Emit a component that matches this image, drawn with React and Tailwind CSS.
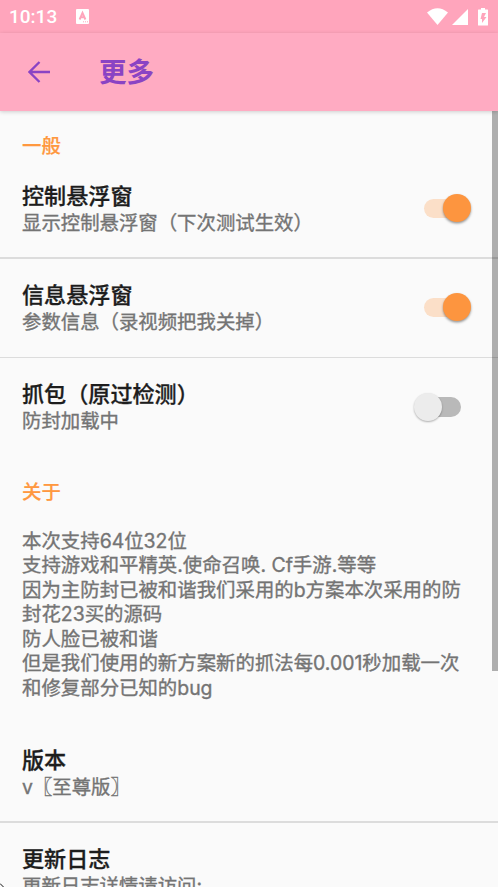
import React from 'react'

// Preferencias de la sección general
const generales = [
  { id: 1, titulo: '控制悬浮窗', resumen: '显示控制悬浮窗（下次测试生效）', activo: true },
  { id: 2, titulo: '信息悬浮窗', resumen: '参数信息（录视频把我关掉）', activo: true },
  { id: 3, titulo: '抓包（原过检测）', resumen: '防封加载中', activo: false }
]

const bordes = ['border-b-2', 'border-b', 'border-b-0']

const lineas = [
  '本次支持64位32位',
  '支持游戏和平精英.使命召唤. Cf手游.等等',
  '因为主防封已被和谐我们采用的b方案本次采用的防',
  '封花23买的源码',
  '防人脸已被和谐',
  '但是我们使用的新方案新的抓法每0.001秒加载一次',
  '和修复部分已知的bug'
]

const Interruptor = ({ activo }) => (
  <div className={activo ? 'relative w-[47px] h-7' : 'relative w-[47px] h-7 mr-[10px]'}>
    <div className={activo
      ? 'absolute left-0 top-[4.5px] w-[37px] h-[19px] rounded-full bg-[#fbdfc8]'
      : 'absolute right-0 top-[4.5px] w-[37px] h-[19.5px] rounded-full bg-[#b9b9b9]'} />
    <div className={activo
      ? 'absolute right-0 top-0 size-7 rounded-full bg-[#fd953f] shadow-[0_1.5px_2.5px_rgba(0,0,0,0.4)]'
      : 'absolute left-0 top-0 size-7 rounded-full bg-[#ececec] shadow-[0_1px_2px_rgba(0,0,0,0.3)]'} />
  </div>
)

const Preferencia = ({ titulo, resumen, children }) => (
  <div className="flex justify-between h-[99px] pl-[22px] pr-[27px] pt-[22.4px]">
    <div>
      <div className="text-[22.1px] leading-[28px] font-medium text-[#1d1d1d] whitespace-nowrap [-webkit-text-stroke:0.3px_#1d1d1d]">{titulo}</div>
      <div className="text-[19.4px] leading-[26px] text-[#747474] whitespace-nowrap [-webkit-text-stroke:0.35px_#747474]">{resumen}</div>
    </div>
    <div className="pt-[12.2px]">{children}</div>
  </div>
)

const App = () => {
  return (
    <div className="relative w-full h-[887px] overflow-hidden bg-[#fafafa] font-['Inter','Noto_Sans_CJK_SC',sans-serif]">
      {/* Barra de estado */}
      <div className="flex items-center justify-between h-[33px] pl-[9px] pr-[8px] bg-[#ffa5bc]">
        <div className="flex items-center">
          <span className="font-[Roboto,sans-serif] text-[19px] leading-[35px] font-medium text-white">10:13</span>
          <svg className="ml-[19px]" width="13" height="15" viewBox="0 0 13 15">
            <rect width="13" height="15" rx="1" fill="#fff" />
            <path d="M3.6 10.5 6.5 3.8l2.900 6.700M4.700 8.300h3.600" fill="none" stroke="#ffa5bc" strokeWidth="1.9" />
            <path d="M7 12.800h1M9 12.800h1M11 12.800h1" stroke="#ffa5bc" />
          </svg>
        </div>
        <svg width="63" height="18" viewBox="0 0 63 18">
          <path d="M0 4.500Q10.500-4 21 4.500L10.500 17Z" fill="#fff" />
          <path d="M25 17 41 1v16Z" fill="#fff" />
          <path d="M54 1.500V0h4v1.500h2.500q.5 0 .5.500v15q0 .5-.5.500h-9q-.5 0-.5-.5V2q0-.5.500-.5Z" fill="#fff" />
          <path d="M55 5H59L57 9H59.500L55 15V11H53.500Z" fill="#ffa5bc" />
        </svg>
      </div>

      {/* Barra superior */}
      <header className="relative flex items-center h-[78px] pl-[28px] bg-[#ffabc2] shadow-[0_1px_4px_rgba(0,0,0,0.18)]">
        <svg width="22" height="22" viewBox="0 0 22 22" fill="none" stroke="#8a43c4" strokeWidth="2.3">
          <path d="M22 11H1.500M11.500 1 1.500 11l10 10" />
        </svg>
        <h1 className="ml-[49px] text-[27.5px] leading-[40px] font-bold text-[#8a43c4]">更多</h1>
      </header>

      <main>
        <h2 className="pl-[22px] pt-[22px] h-[48.6px] text-[19.4px] leading-[26px] font-medium text-[#ff983f] [-webkit-text-stroke:0.2px_#ff983f]">一般</h2>
        {generales.map((item, i) => (
          <div key={item.id} className={`${bordes[i]} border-[#dcdcdc] h-[99.2px]`}>
            <Preferencia titulo={item.titulo} resumen={item.resumen}>
              <Interruptor activo={item.activo} />
            </Preferencia>
          </div>
        ))}

        <h2 className="pl-[22px] pt-[22px] h-[71.8px] text-[19.4px] leading-[26px] font-medium text-[#ff983f] [-webkit-text-stroke:0.2px_#ff983f]">关于</h2>
        <div className="pl-[22px] h-[194.6px] text-[19.42px] leading-[24.5px] text-[#747474] whitespace-nowrap [-webkit-text-stroke:0.35px_#747474]">
          {lineas.map((linea) => (
            <div key={linea}>{linea}</div>
          ))}
        </div>
        <div className="border-b-2 border-[#dcdcdc] h-[99px]">
          <Preferencia titulo="版本" resumen="v〖至尊版〗" />
        </div>
        <Preferencia titulo="更新日志" resumen="更新日志详情请访问:" />
      </main>

      {/* Barra de desplazamiento */}
      <div className="absolute right-0 top-[111px] w-[6px] h-[560px] bg-black/30" />

      {/* Esquina inferior izquierda */}
      <svg className="absolute left-0 bottom-0" width="4" height="4" viewBox="0 0 4 4">
        <path d="M0 .5 3.500 4" fill="none" stroke="#111" />
      </svg>
    </div>
  )
}

export default App
